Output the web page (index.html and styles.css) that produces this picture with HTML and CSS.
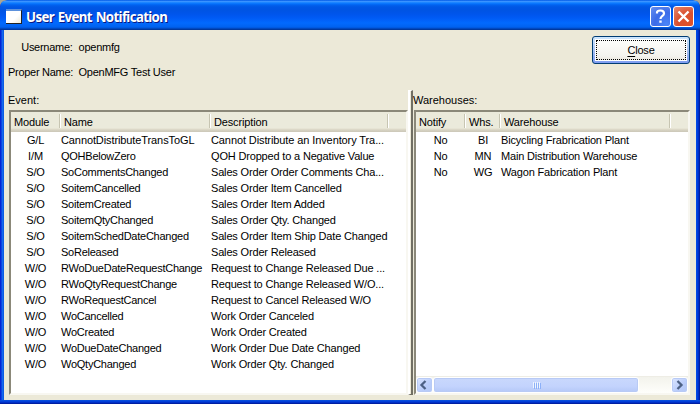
FILE: index.html
```
<!DOCTYPE html>
<html lang="en">
<head>
<meta charset="utf-8">
<title>User Event Notification</title>
<link rel="stylesheet" href="styles.css">
</head>
<body>
<div class="window">
  <header class="titlebar">
    <span class="app-icon"></span>
    <h1>User Event Notification</h1>
    <button class="caption help" aria-label="Help"><svg width="21" height="21" viewBox="0 0 21 21"><path d="M7 7.5V6.5Q7 4.5 10.5 4.5T14 7.5C14 10 10.5 9.8 10.5 13" fill="none" stroke="#fff" stroke-width="2.2"/><path d="M9.3 14.5h2.4v2.3H9.3z" fill="#fff"/></svg></button>
    <button class="caption exit" aria-label="Close window"><svg width="21" height="21" viewBox="0 0 21 21"><path d="M5.5 5.5l10 10M15.5 5.5l-10 10" stroke="#fff" stroke-width="2.4"/></svg></button>
  </header>
  <main class="client">
    <section class="top">
      <dl class="user">
        <dt>Username:</dt><dd>openmfg</dd>
        <dt>Proper Name:</dt><dd>OpenMFG Test User</dd>
      </dl>
      <button class="close"><span class="focus"><span><u>C</u>lose</span></span></button>
    </section>
    <section class="panes">
      <div class="pane events">
        <h2>Event:</h2>
        <div class="list">
          <div class="head"><span>Module</span><span>Name</span><span>Description</span></div>
          <div class="row"><span>G/L</span><span class="loose">CannotDistributeTransToGL</span><span class="loose">Cannot Distribute an Inventory Tra...</span></div>
          <div class="row"><span>I/M</span><span>QOHBelowZero</span><span>QOH Dropped to a Negative Value</span></div>
          <div class="row"><span>S/O</span><span>SoCommentsChanged</span><span>Sales Order Order Comments Cha...</span></div>
          <div class="row"><span>S/O</span><span>SoitemCancelled</span><span>Sales Order Item Cancelled</span></div>
          <div class="row"><span>S/O</span><span>SoitemCreated</span><span>Sales Order Item Added</span></div>
          <div class="row"><span>S/O</span><span>SoitemQtyChanged</span><span>Sales Order Qty. Changed</span></div>
          <div class="row"><span>S/O</span><span>SoitemSchedDateChanged</span><span>Sales Order Item Ship Date Changed</span></div>
          <div class="row"><span>S/O</span><span>SoReleased</span><span>Sales Order Released</span></div>
          <div class="row"><span>W/O</span><span>RWoDueDateRequestChange</span><span>Request to Change Released Due ...</span></div>
          <div class="row"><span>W/O</span><span>RWoQtyRequestChange</span><span>Request to Change Released W/O...</span></div>
          <div class="row"><span>W/O</span><span>RWoRequestCancel</span><span>Request to Cancel Released W/O</span></div>
          <div class="row"><span>W/O</span><span>WoCancelled</span><span>Work Order Canceled</span></div>
          <div class="row"><span>W/O</span><span>WoCreated</span><span>Work Order Created</span></div>
          <div class="row"><span>W/O</span><span>WoDueDateChanged</span><span>Work Order Due Date Changed</span></div>
          <div class="row"><span>W/O</span><span>WoQtyChanged</span><span>Work Order Qty. Changed</span></div>
        </div>
      </div>
      <div class="splitter"></div>
      <div class="pane warehouses">
        <h2>Warehouses:</h2>
        <div class="list">
          <div class="head"><span>Notify</span><span>Whs.</span><span>Warehouse</span></div>
          <div class="row"><span>No</span><span>BI</span><span>Bicycling Frabrication Plant</span></div>
          <div class="row"><span>No</span><span>MN</span><span>Main Distribution Warehouse</span></div>
          <div class="row"><span>No</span><span>WG</span><span>Wagon Fabrication Plant</span></div>
          <div class="scrollbar">
            <span class="arrow"><svg width="14" height="14" viewBox="0 0 14 14"><path d="M8.5 3L4.5 7l4 4" fill="none" stroke="#4d6185" stroke-width="2.3"/></svg></span>
            <span class="thumb"><i></i><i></i><i></i><i></i></span>
            <span class="arrow right"><svg width="14" height="14" viewBox="0 0 14 14"><path d="M5.5 3l4 4-4 4" fill="none" stroke="#4d6185" stroke-width="2.3"/></svg></span>
          </div>
        </div>
      </div>
    </section>
  </main>
</div>
</body>
</html>
```
FILE: styles.css
```
* { box-sizing: border-box; }
body {
  margin: 0;
  width: 700px;
  height: 404px;
  overflow: hidden;
  background: #aaa694;
  font: 11px/16px "Liberation Sans", Arial, sans-serif;
  color: #000;
}
h1, h2, dl, dd { margin: 0; font-weight: normal; }
h2 { font-size: 11px; }
button { font: inherit; padding: 0; margin: 0; }
svg { display: block; }

.window {
  width: 700px;
  height: 404px;
  display: flex;
  flex-direction: column;
  border-radius: 7px 7px 0 0;
  overflow: hidden;
  padding: 0 4px 4px;
  background:
    linear-gradient(#0855dd, #0038d8 50%, #001590) bottom / 100% 4px no-repeat,
    linear-gradient(90deg, #0019cf, #0831d9 25%, #166aee 60%, #0855dd) left / 4px 100% no-repeat,
    linear-gradient(90deg, #0450e8, #0038d8 50%, #001590) right / 4px 100% no-repeat;
}
.titlebar {
  height: 30px;
  flex: none;
  margin: 0 -4px;
  padding: 0 6px;
  display: flex;
  align-items: center;
  border-radius: 7px 7px 0 0;
  background: linear-gradient(#0058e6 0, #3a93ff 1.5px, #288eff 2px, #127dff 3px, #036ffc 4px, #0262ee 5px, #0057e5 7px, #0054e3 10px, #0055eb 14px, #005bf5 18px, #026afe 23px, #0062ef 27px, #0052d6 28px, #0040ab 29px, #003092 30px);
}
.app-icon {
  width: 16px;
  height: 15px;
  margin-top: 2px;
  background: linear-gradient(135deg, #fff 60%, #ece9d8);
  border: solid #222;
  border-width: 0 1px 1px 0;
  border-top: 2px solid #5c91dc;
}
h1 {
  margin: 4px auto 0 4px;
  font: bold 13.3px/20px "Noto Sans", "Open Sans", sans-serif;
  letter-spacing: -0.66px;
  word-spacing: 1px;
  color: #fff;
  text-shadow: 1px 1px #0a1883;
  white-space: nowrap;
}
.caption {
  width: 21px;
  height: 21px;
  margin: 3px 0 0 2px;
  border: 1px solid #fff;
  border-radius: 3px;
  overflow: hidden;
  background: radial-gradient(circle at 80% 90%, #4a85f8, #3c6be8 50%, #668fee 100%);
}
.caption svg { margin: -1px; }
.caption.exit { background: radial-gradient(circle at 80% 90%, #df5229, #d9502f 50%, #e78a71 100%); }

.client {
  flex: 1;
  min-height: 0;
  display: flex;
  flex-direction: column;
  padding: 6px 6px 5px 4px;
  background: #ece9d8;
}
.top {
  height: 54px;
  display: flex;
  justify-content: space-between;
}
.user {
  display: grid;
  grid-template-columns: 64.5px auto;
  grid-auto-rows: 16px;
  row-gap: 9px;
  column-gap: 6px;
  padding-top: 3px;
  letter-spacing: -0.24px;
}
.user dt { text-align: right; white-space: nowrap; letter-spacing: -0.28px; }
.user dd { white-space: nowrap; }
.close {
  width: 98px;
  height: 28px;
  border: 1px solid #003c74;
  border-radius: 3px;
  padding: 2px;
  background: linear-gradient(#cee7ff, #bcd4f6 30%, #7f9cf0);
}
.focus {
  display: flex;
  align-items: center;
  justify-content: center;
  height: 22px;
  border: 1px solid #fff;
  background: linear-gradient(#fdfdfb, #f4f3ee 80%, #ebe8e0);
  outline: 1px dotted #000;
  outline-offset: -2px;
  letter-spacing: -0.2px;
}
.close u { text-underline-offset: 2px; }

.panes {
  flex: 1;
  min-height: 0;
  display: flex;
}
.pane { display: flex; flex-direction: column; }
.pane h2 { height: 20px; line-height: 20px; }
.events { width: 400px; padding-left: 1px; }
.events h2 { margin-left: -1px; }
.warehouses { flex: 1; }
.warehouses .list { margin-left: 1px; }
.splitter {
  width: 5px;
  border: solid;
  border-width: 1px 2px 1px 2px;
  border-color: #fff #716f64 #716f64 #fff;
  background: #ece9d8;
}
.list {
  flex: 1;
  display: flex;
  flex-direction: column;
  border: 2px solid;
  border-color: #8b8879 #f8f7f1 #f8f7f1 #8b8879;
  background: #fff;
}
.head, .row { display: grid; white-space: nowrap; }
.events .head, .events .row { grid-template-columns: 49px 150px 178px; }
.warehouses .head, .warehouses .row { grid-template-columns: 49px 35px 170px; }
.head {
  height: 20px;
  background: linear-gradient(#ebeadb 16px, #e2decd 17px, #d6d2c2 18px, #cbc7b8 20px);
}
.head span {
  height: 14px;
  line-height: 16px;
  margin-top: 2px;
  padding-left: 3px;
  border-right: 1px solid #c7c5b2;
  box-shadow: 1px 0 #fff;
  letter-spacing: -0.15px;
}
.head span + span { padding-left: 4px; }
.row { height: 16px; }
.row span { padding-left: 1px; letter-spacing: -0.17px; }
.events .row span:nth-child(2) { letter-spacing: -0.25px; }
.events .row .loose:nth-child(n) { letter-spacing: -0.1px; }
.row span:first-child { text-align: center; padding-left: 0; }
.warehouses .row span:nth-child(2) { text-align: center; }

.scrollbar {
  margin-top: auto;
  height: 17px;
  display: flex;
  border-top: 1px solid #eeede5;
  background: linear-gradient(#f3f3ec, #fefefb);
}
.arrow, .thumb {
  height: 16px;
  border: 1px solid #fff;
  border-radius: 3px;
  background: linear-gradient(135deg, #dce6ff, #bacdfb 60%, #b4c8f6);
  box-shadow: inset 0 0 0 1px #b8caf5;
}
.arrow { width: 17px; flex: none; }
.arrow.right { margin-left: auto; }
.thumb {
  width: 206px;
  display: flex;
  align-items: center;
  justify-content: center;
  gap: 1px;
  background: linear-gradient(#c9d8fc, #c3d3fd 60%, #b5c8f7);
}
.thumb i {
  width: 1px;
  height: 6px;
  background: #eef4fe;
  box-shadow: 1px 1px #8cb0f8;
}
```
